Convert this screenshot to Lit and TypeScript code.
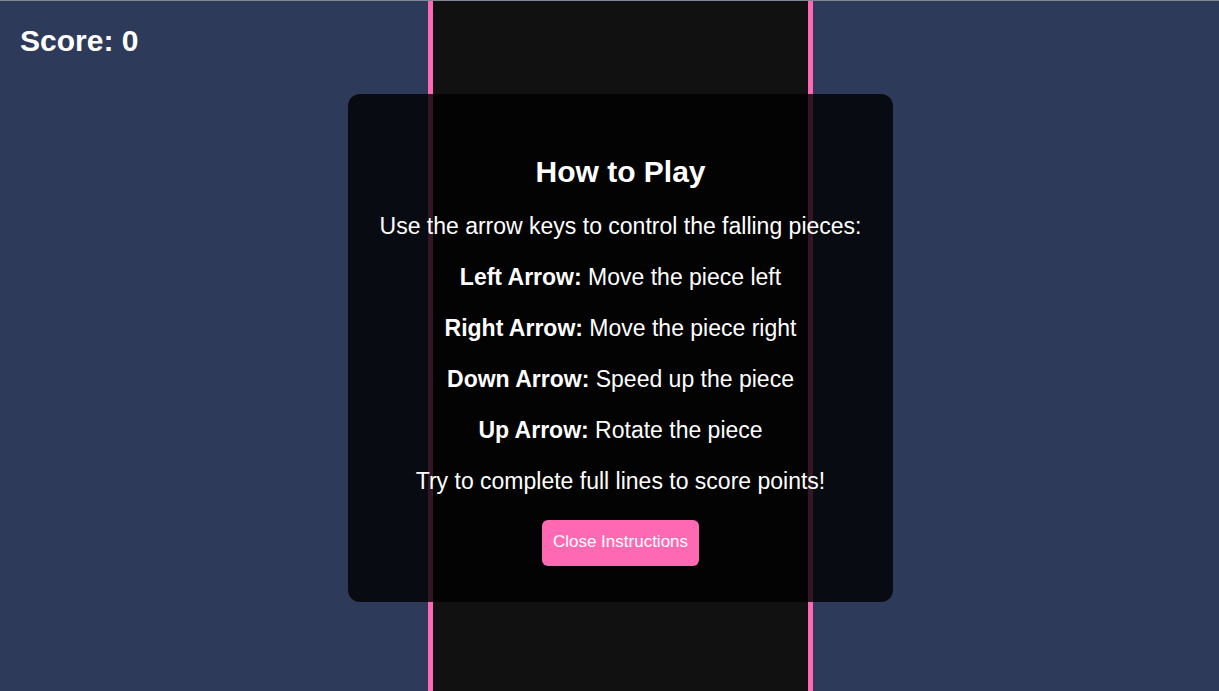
import { LitElement, html, css } from "lit";
import { customElement, state } from "lit/decorators.js";

const controls = [
  { key: "Left Arrow:", action: "Move the piece left" },
  { key: "Right Arrow:", action: "Move the piece right" },
  { key: "Down Arrow:", action: "Speed up the piece" },
  { key: "Up Arrow:", action: "Rotate the piece" },
];

@customElement("app-root")
export class AppRoot extends LitElement {
  @state() private score = 0;
  @state() private showInstructions = true;

  static styles = css`
    :host {
      display: flex;
      justify-content: center;
      position: relative;
      box-sizing: border-box;
      min-height: 100vh;
      padding-left: 22px;
      overflow: hidden;
      border-top: 1px solid #808696;
      background: #2e3a59;
      color: #fff;
      font-family: "Liberation Sans", Arial, sans-serif;
    }
    .board {
      box-sizing: border-box;
      width: 385px;
      border: solid #ff69b4;
      border-width: 0 5px;
      background: #111;
    }
    .score {
      position: absolute;
      top: 22px;
      left: 20px;
      font-size: 30px;
      line-height: 36px;
      font-weight: bold;
    }
    .overlay {
      position: absolute;
      inset: 4px 0 0 22px;
      display: flex;
      align-items: center;
      justify-content: center;
    }
    .dialog {
      padding: 36px 32px;
      border-radius: 12px;
      background: rgba(0, 0, 0, 0.8);
      text-align: center;
      font-size: 23px;
      line-height: 27px;
    }
    h2 {
      margin: 24px 0;
      font-size: 30px;
      line-height: 35px;
    }
    p {
      margin: 24px 0;
    }
    button {
      display: block;
      margin: 25px auto 0;
      padding: 11px 11px 14px;
      border: 0;
      border-radius: 6px;
      background: #ff69b4;
      color: #fff;
      font: 17px/21px "Liberation Sans", Arial, sans-serif;
      cursor: pointer;
    }
  `;

  private close() {
    this.showInstructions = false;
  }

  render() {
    return html`
      <main class="board" aria-label="Game board"></main>
      <div class="score">Score: ${this.score}</div>
      ${this.showInstructions
        ? html`<div class="overlay">
            <section class="dialog" role="dialog" aria-labelledby="title">
              <h2 id="title">How to Play</h2>
              <p>Use the arrow keys to control the falling pieces:</p>
              ${controls.map((c) => html`<p><strong>${c.key}</strong> ${c.action}</p>`)}
              <p>Try to complete full lines to score points!</p>
              <button type="button" @click=${this.close}>Close Instructions</button>
            </section>
          </div>`
        : null}
    `;
  }
}
